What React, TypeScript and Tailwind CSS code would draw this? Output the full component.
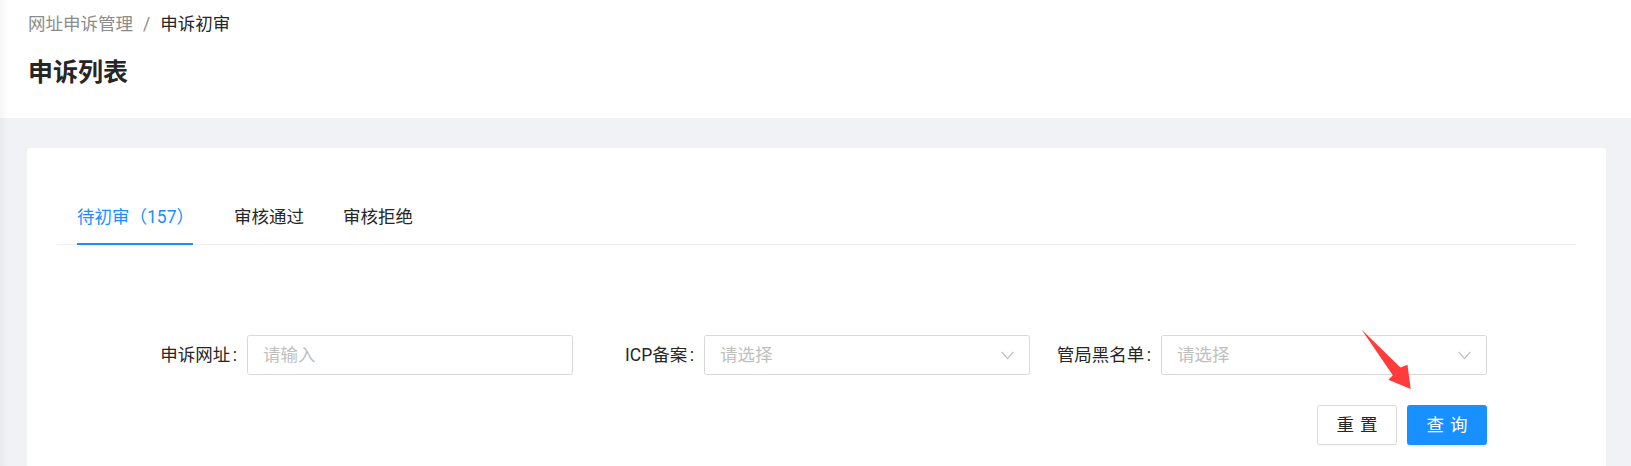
import React from "react";

function Chevron() {
  return (
    <svg width="13" height="9" viewBox="0 0 13 9" className="shrink-0">
      <polyline points="0.8,1 6.5,7.6 12.2,1" fill="none" stroke="#bfbfbf" strokeWidth="1.2" />
    </svg>
  );
}

function FormItem({ label, placeholder, select }: { label: string; placeholder: string; select?: boolean }) {
  return (
    <div className="flex w-[457px] items-center">
      <div className="flex flex-1 items-center justify-end text-[17.5px] leading-[27px] text-[#262626]">
        <span>{label}</span>
        <span className="ml-[2.5px] mr-[10px]">:</span>
      </div>
      <div className="flex h-[40px] w-[326px] items-center justify-between rounded-[2.5px] border border-[#d9d9d9] bg-white pl-[15px] pr-[15px]">
        <span className="text-[17.5px] leading-[27px] text-[#bfbfbf]">{placeholder}</span>
        {select ? <Chevron /> : null}
      </div>
    </div>
  );
}

export default function App() {
  return (
    <div className="relative min-h-[466px] w-full overflow-hidden bg-[#f0f2f5] font-['Roboto','Noto_Sans_CJK_SC',sans-serif]">
      <div className="h-[118px] bg-white pl-[28px]">
        <div className="pt-[10px] text-[17.5px] leading-[28px]">
          <span className="text-[#8c8c8c]">网址申诉管理</span>
          <span className="mx-[10px] text-[#8c8c8c]">/</span>
          <span className="text-[#262626]">申诉初审</span>
        </div>
        <div className="mt-[17px] text-[25px] font-bold leading-[35px] text-[#262626]">申诉列表</div>
      </div>

      <div className="pl-[27px] pr-[25px] pt-[30px]">
        <div className="h-[400px] rounded-[3px] bg-white px-[30px] pt-[43px]">
          <div className="flex gap-[41px] border-b border-[#f0f0f0] pl-[20px]">
            <div className="relative flex h-[53px] w-[116px] items-center whitespace-nowrap text-[17.5px] text-[#1890ff]">
              待初审（157）
              <div className="absolute bottom-[-1px] left-0 right-0 h-[2px] bg-[#1890ff]" />
            </div>
            <div className="flex h-[53px] w-[70px] items-center whitespace-nowrap text-[17.5px] text-[#262626]">审核通过</div>
            <div className="-ml-[2px] flex h-[53px] w-[70px] items-center whitespace-nowrap text-[17.5px] text-[#262626]">审核拒绝</div>
          </div>

          <div className="ml-[59px] mt-[90px] w-[1371px]">
            <div className="flex">
              <FormItem label="申诉网址" placeholder="请输入" />
              <FormItem label="ICP备案" placeholder="请选择" select />
              <FormItem label="管局黑名单" placeholder="请选择" select />
            </div>
            <div className="mt-[30px] flex justify-end gap-[10px]">
              <button className="h-[40px] w-[80px] rounded-[2.5px] border border-[#d9d9d9] bg-white text-[17.5px] text-[#262626] shadow-[0_2px_0_rgba(0,0,0,0.015)]">
                <span className="mr-[-0.34em] tracking-[0.34em]">重置</span>
              </button>
              <button className="h-[40px] w-[80px] rounded-[2.5px] border border-[#1890ff] bg-[#1890ff] text-[17.5px] text-white shadow-[0_2px_0_rgba(0,0,0,0.045)]">
                <span className="mr-[-0.34em] tracking-[0.34em]">查询</span>
              </button>
            </div>
          </div>
        </div>
      </div>

      <div className="pointer-events-none absolute inset-y-0 left-0 w-[8px] bg-gradient-to-r from-[rgba(0,0,0,0.035)] to-transparent" />

      <svg className="pointer-events-none absolute left-0 top-0" width="1631" height="466">
        <polygon
          points="1361.5,329.5 1400.5,367.5 1407.5,364.8 1410.7,389 1388.3,379.8 1392.8,375.2"
          fill="#ff3b3b"
        />
      </svg>
    </div>
  );
}
